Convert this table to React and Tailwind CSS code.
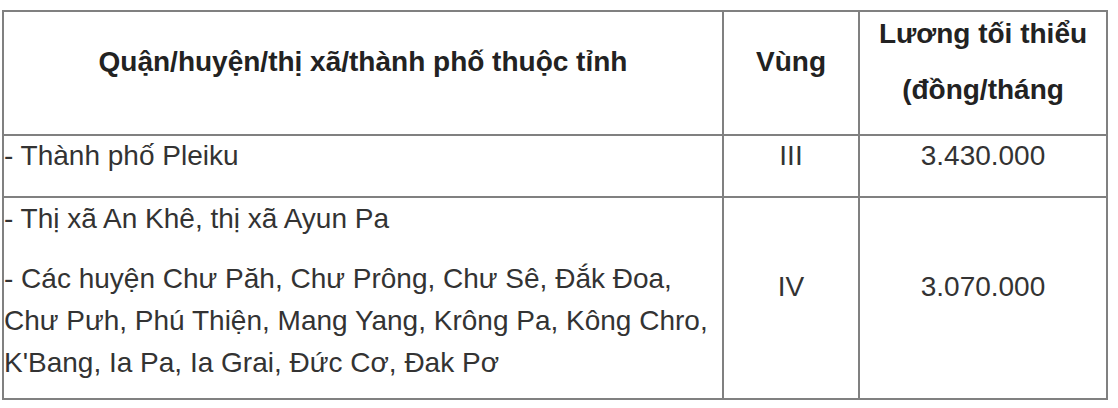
const FONT = { fontFamily: '"Liberation Sans", Arial, Helvetica, sans-serif' }

const cell = 'border-l-2 border-t-2 border-[#808080]'

export default function App() {
  return (
    <div className="bg-white w-[1118px] h-[408px] pt-[10px] pl-[2px] text-[#333333]" style={FONT}>
      <div className="grid grid-cols-[720px_136px_248px] w-[1106px] border-r-2 border-b-2 border-[#808080] text-[28px] leading-[42px]">
        {/* header */}
        <div className={`${cell} h-[124px] pt-[29px] text-center font-bold text-[#222222]`}>
          Quận/huyện/thị xã/thành phố thuộc tỉnh
        </div>
        <div className={`${cell} h-[124px] pt-[29px] text-center font-bold text-[#222222]`}>
          Vùng
        </div>
        <div className={`${cell} h-[124px] pt-[1px] text-center font-bold text-[#222222]`}>
          <p>Lương tối thiểu</p>
          <p className="mt-[14px]">(đồng/tháng</p>
        </div>

        {/* row 1 */}
        <div className={`${cell} h-[62px] leading-[39px]`}>
          <p>- Thành phố Pleiku</p>
        </div>
        <div className={`${cell} h-[62px] leading-[39px] text-center`}>III</div>
        <div className={`${cell} h-[62px] leading-[39px] text-center`}>3.430.000</div>

        {/* row 2 */}
        <div className={`${cell} h-[202px]`}>
          <p>- Thị xã An Khê, thị xã Ayun Pa</p>
          <p className="mt-[18px]">
            - Các huyện Chư Păh, Chư Prông, Chư Sê, Đắk Đoa,<br />
            Chư Pưh, Phú Thiện, Mang Yang, Krông Pa, Kông Chro,<br />
            K'Bang, Ia Pa, Ia Grai, Đức Cơ, Đak Pơ
          </p>
        </div>
        <div className={`${cell} h-[202px] pt-[68px] text-center`}>IV</div>
        <div className={`${cell} h-[202px] pt-[68px] text-center`}>3.070.000</div>
      </div>
    </div>
  )
}
